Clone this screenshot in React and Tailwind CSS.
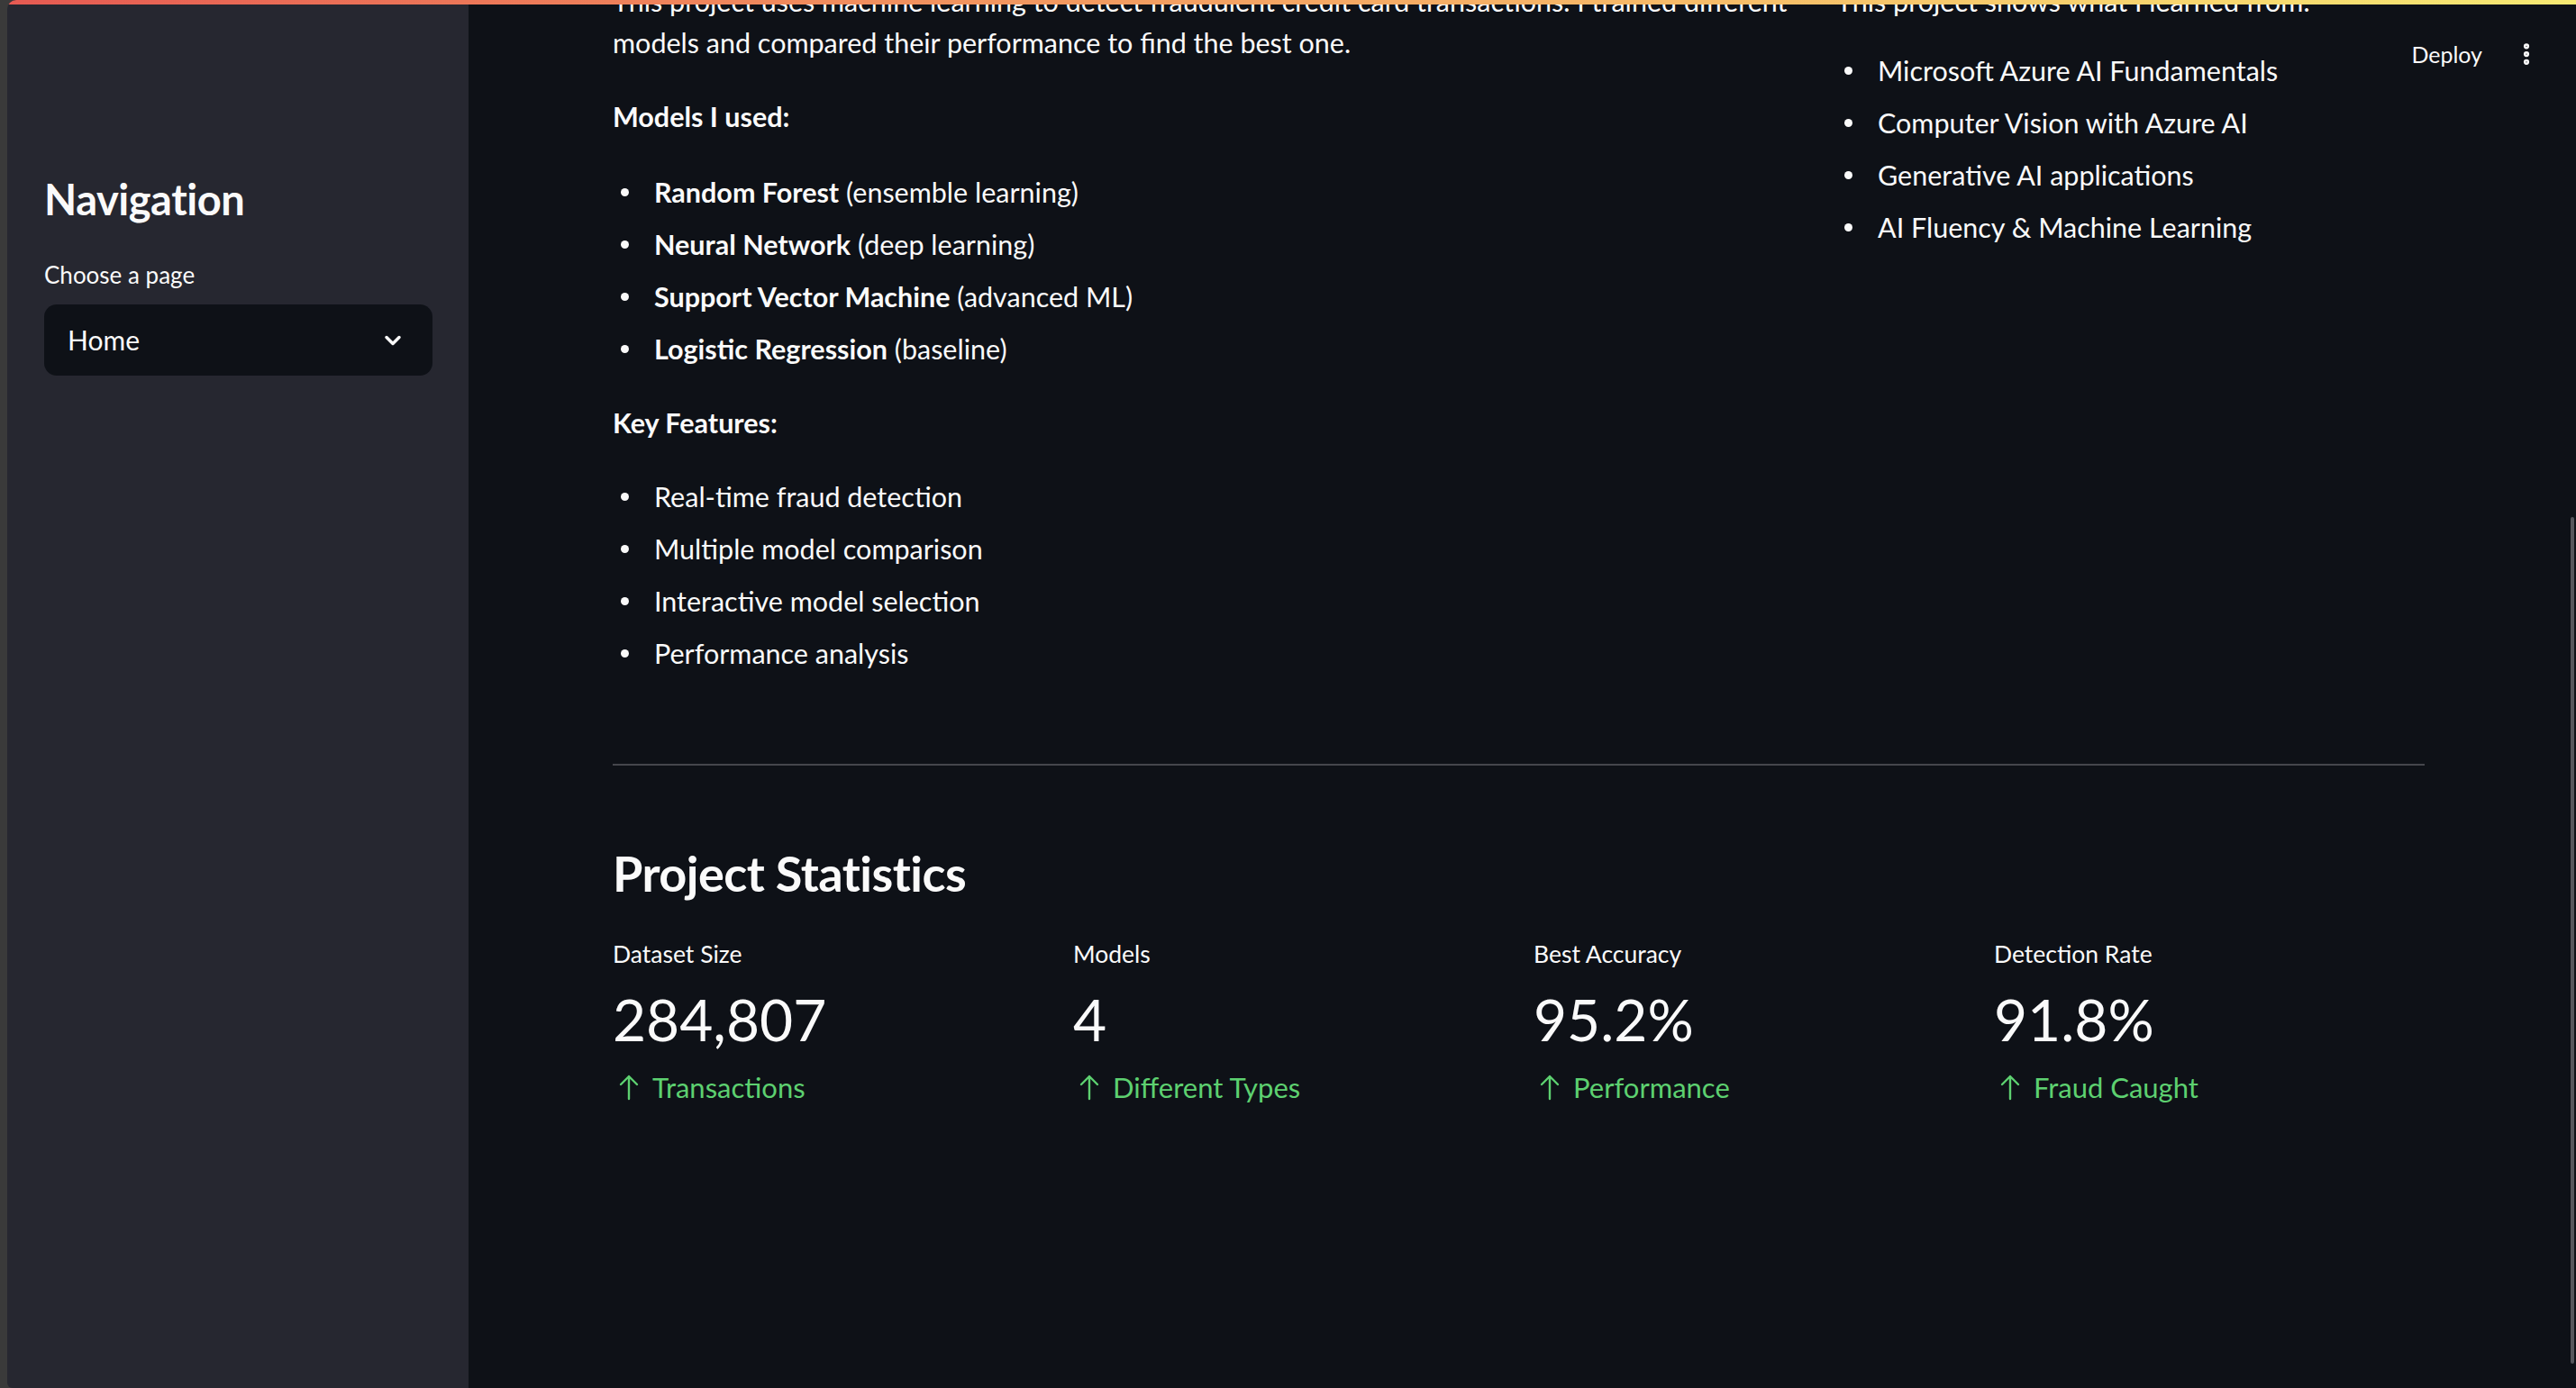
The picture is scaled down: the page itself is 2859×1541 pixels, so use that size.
import React from 'react';
import { ChevronDown, EllipsisVertical } from 'lucide-react';

const models = [
  { name: 'Random Forest', note: '(ensemble learning)' },
  { name: 'Neural Network', note: '(deep learning)' },
  { name: 'Support Vector Machine', note: '(advanced ML)' },
  { name: 'Logistic Regression', note: '(baseline)' },
];

const features = [
  'Real-time fraud detection',
  'Multiple model comparison',
  'Interactive model selection',
  'Performance analysis',
];

const learned = [
  'Microsoft Azure AI Fundamentals',
  'Computer Vision with Azure AI',
  'Generative AI applications',
  'AI Fluency & Machine Learning',
];

const stats = [
  { label: 'Dataset Size', value: '284,807', delta: 'Transactions' },
  { label: 'Models', value: '4', delta: 'Different Types' },
  { label: 'Best Accuracy', value: '95.2%', delta: 'Performance' },
  { label: 'Detection Rate', value: '91.8%', delta: 'Fraud Caught' },
];

const Bullet = ({ children }) => (
  <li className="flex items-center h-[46px]">
    <span className="w-[46px] shrink-0 flex items-center">
      <span className="ml-[9px] w-[9px] h-[9px] rounded-full bg-[#fafafa]" />
    </span>
    <span className="whitespace-nowrap">{children}</span>
  </li>
);

const UpArrow = () => (
  <svg width="26" height="30" viewBox="0 0 26 30" fill="none" stroke="currentColor" strokeWidth="2.4" strokeLinecap="round" strokeLinejoin="round" className="ml-[5px] shrink-0">
    <path d="M13 28V3M4 12l9-9 9 9" />
  </svg>
);

export default function App() {
  return (
    <div
      className="flex h-screen w-full bg-[#3a3a3a] pl-[8px] text-[#fafafa] overflow-hidden"
      style={{ fontFamily: 'Lato, "Noto Sans", sans-serif' }}
    >
      <div className="relative flex flex-1 rounded-tl-[10px] rounded-bl-[6px] overflow-hidden">
        {/* decoration bar */}
        <div className="absolute top-0 left-0 right-0 h-[5px] z-20 bg-gradient-to-r from-[#e65a52] to-[#f7ea73]" />

        {/* Sidebar */}
        <aside className="w-[512px] shrink-0 bg-[#262730] px-[41px] pt-[193px]">
          <h2 className="text-[47px] leading-[56px] font-bold tracking-[-0.01em]">Navigation</h2>
          <p className="mt-[38px] text-[26px] leading-[36px]">Choose a page</p>
          <div className="mt-[15px] w-[431px] h-[79px] rounded-[14px] bg-[#0e1117] flex items-center justify-between pl-[26px] pr-[30px]">
            <span className="text-[30px]">Home</span>
            <ChevronDown size={28} strokeWidth={3} />
          </div>
        </aside>

        {/* Main */}
        <main className="relative flex-1 bg-[#0e1117] overflow-hidden">
          <div className="absolute top-[40px] right-[40px] z-10 flex items-center gap-[34px]">
            <span className="text-[25px] leading-[40px]">Deploy</span>
            <EllipsisVertical size={30} strokeWidth={3} />
          </div>

          <div className="pl-[160px] pr-[168px] -mt-[22px] text-[30.5px] leading-[46px]">
            <div className="grid grid-cols-[1316px_1fr] gap-[42px]">
              <div>
                <p>
                  <span className="block whitespace-nowrap">This project uses machine learning to detect fraudulent credit card transactions. I trained different</span>
                  <span className="block whitespace-nowrap">models and compared their performance to find the best one.</span>
                </p>
                <p className="mt-[36px] font-bold">Models I used:</p>
                <ul className="mt-[38px] flex flex-col gap-[12px]">
                  {models.map((m) => (
                    <Bullet key={m.name}>
                      <b className="font-bold">{m.name}</b> {m.note}
                    </Bullet>
                  ))}
                </ul>
                <p className="mt-[36px] font-bold">Key Features:</p>
                <ul className="mt-[36px] flex flex-col gap-[12px]">
                  {features.map((f) => (
                    <Bullet key={f}>{f}</Bullet>
                  ))}
                </ul>
              </div>
              <div>
                <p className="whitespace-nowrap">This project shows what I learned from:</p>
                <ul className="mt-[31px] flex flex-col gap-[12px]">
                  {learned.map((l) => (
                    <Bullet key={l}>{l}</Bullet>
                  ))}
                </ul>
              </div>
            </div>

            <hr className="mt-[100px] border-0 h-[2px] bg-[#45464c]" />

            <h3 className="mt-[89px] text-[54px] leading-[62px] font-bold tracking-[-0.01em]">Project Statistics</h3>

            <div className="mt-[41px] grid grid-cols-4 gap-[33px]">
              {stats.map((s) => (
                <div key={s.label}>
                  <div className="text-[26.5px] leading-[35px]">{s.label}</div>
                  <div className="mt-[15px] text-[64px] leading-[80px]">{s.value}</div>
                  <div className="mt-[15px] flex items-center gap-[13px] text-[31px] leading-[40px] text-[#5dd070]">
                    <UpArrow />
                    <span>{s.delta}</span>
                  </div>
                </div>
              ))}
            </div>
          </div>

          {/* scrollbar thumb */}
          <div className="absolute right-[2px] top-[574px] w-[4px] h-[940px] rounded-full bg-[#55565c]" />
        </main>
      </div>
    </div>
  );
}
